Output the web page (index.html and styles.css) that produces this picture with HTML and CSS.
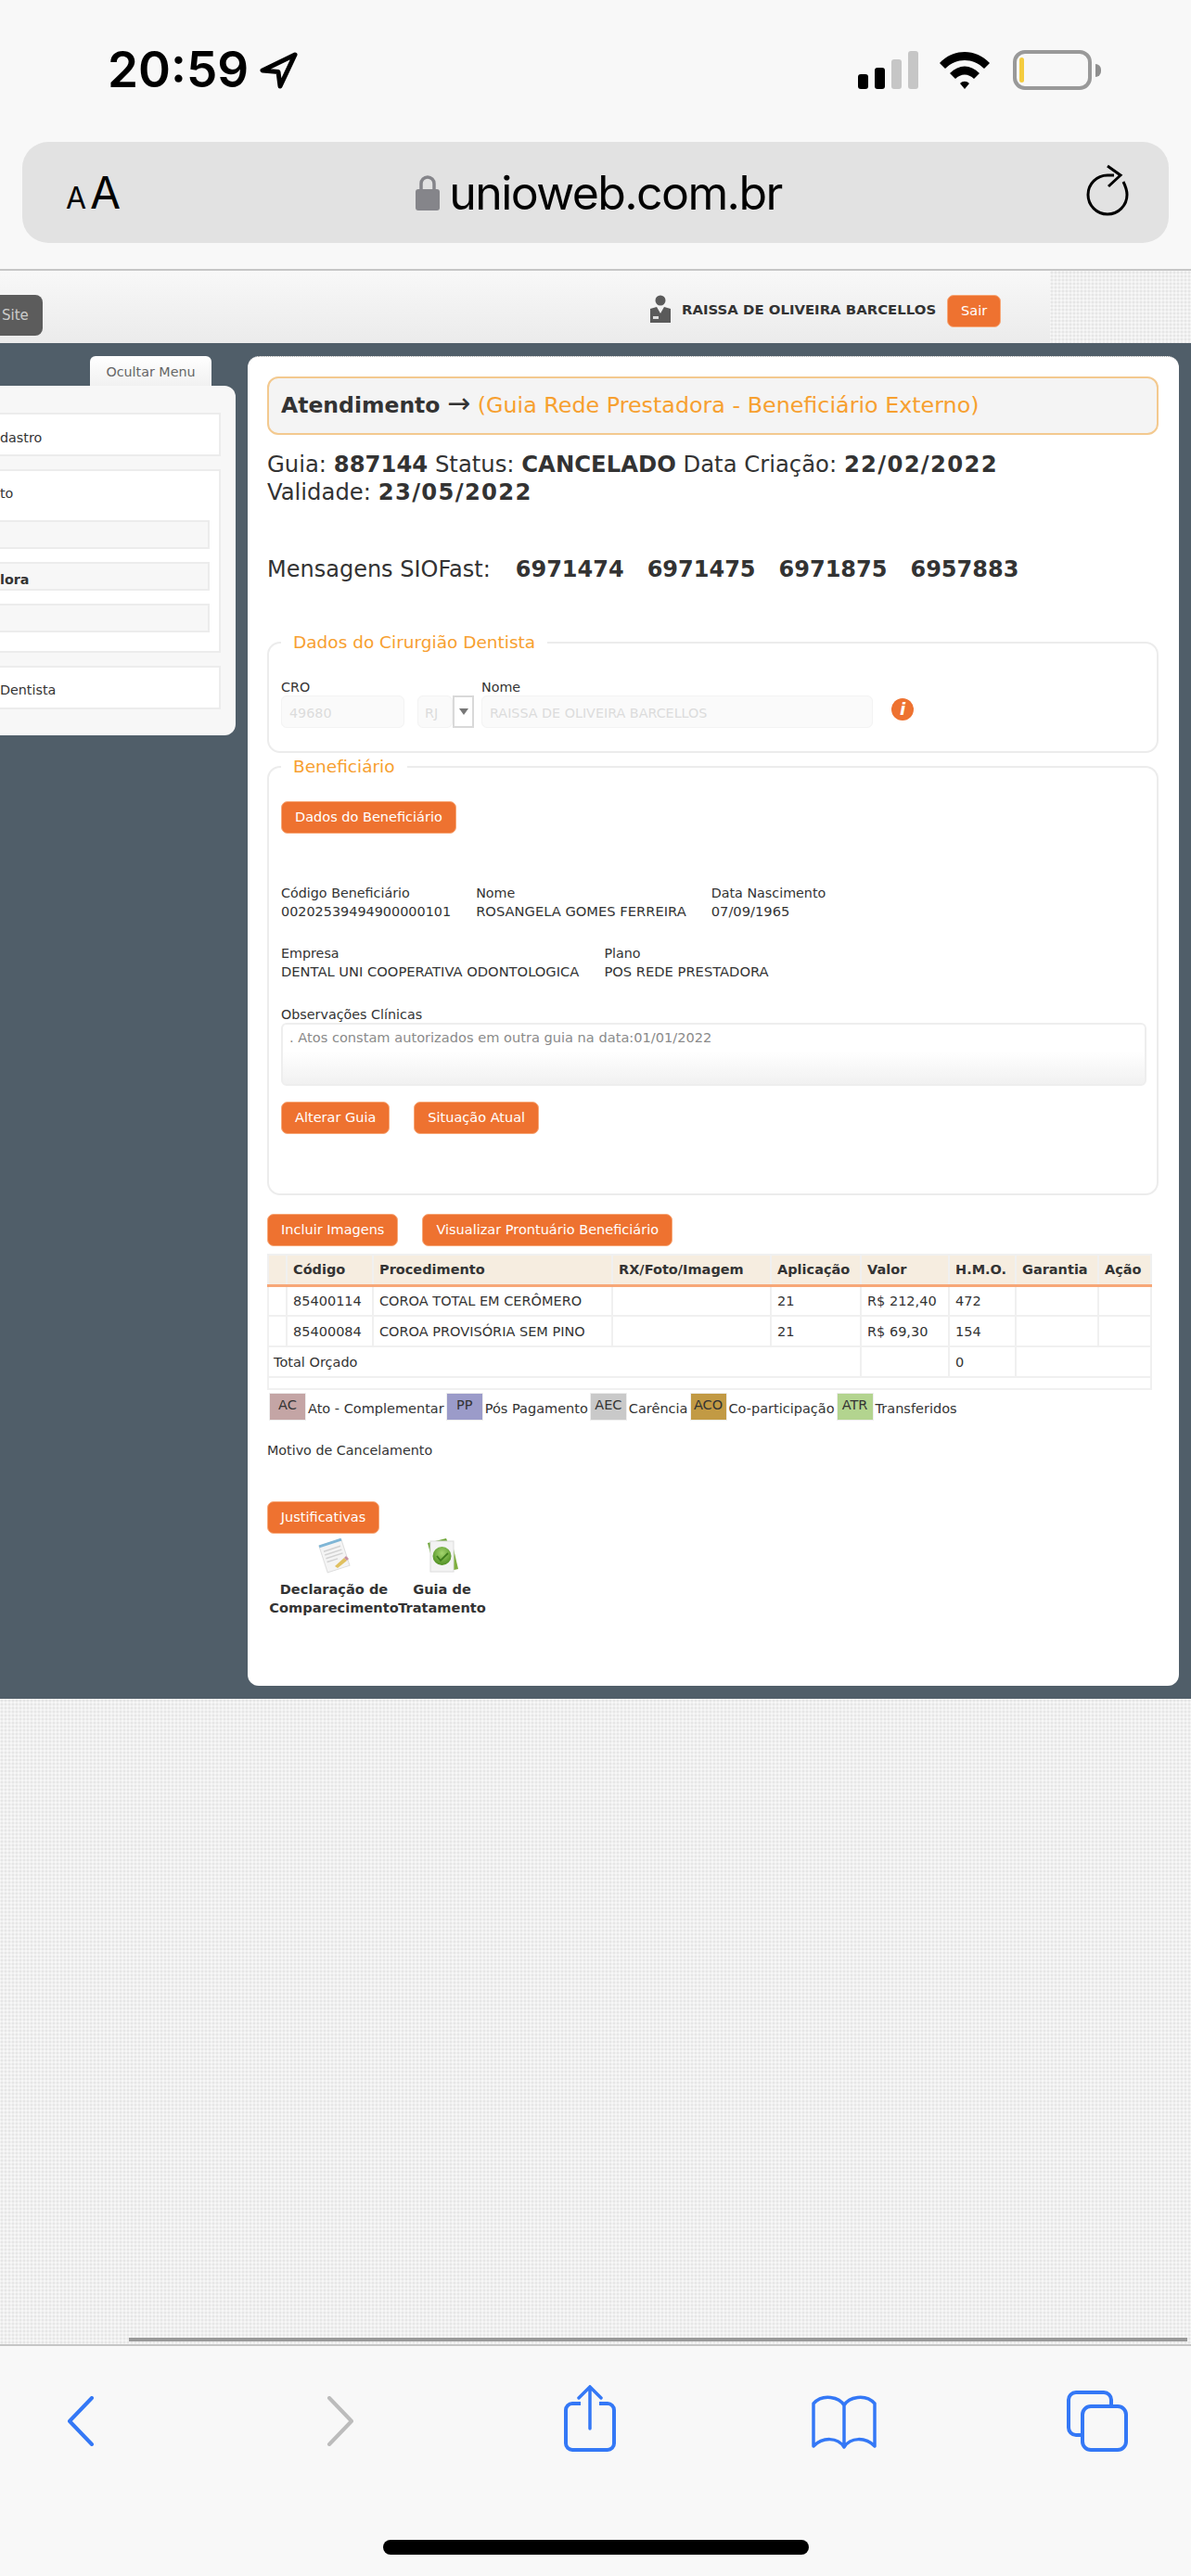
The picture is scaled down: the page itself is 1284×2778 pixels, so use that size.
FILE: index.html
```html
<!DOCTYPE html>
<html lang="pt-BR">
<head>
<meta charset="utf-8">
<title>unioweb.com.br</title>
<link rel="stylesheet" href="styles.css">
</head>
<body>
<header class="chrome-top">
  <div class="status">
    <div class="clock"><span>20:59</span>
      <svg class="loc" viewBox="0 0 41 40" width="41" height="40"><path d="M38 3 L3 20 L20 21.5 L22 37 Z" fill="none" stroke="#000" stroke-width="5" stroke-linejoin="round"/></svg>
    </div>
    <div class="status-icons">
      <div class="signal"><i class="b1"></i><i class="b2"></i><i class="b3"></i><i class="b4"></i></div>
      <svg class="wifi" viewBox="0 0 58 42" width="58" height="42"><path d="M2 14 C17 -2 41 -2 56 14 L50 20 C38 8 20 8 8 20 Z M13 25 C23 15 35 15 45 25 L39 31 C33 25 25 25 19 31 Z M24 36 C27 33 31 33 34 36 L29 42 Z" fill="#000"/></svg>
      <div class="battery"><div class="battery-body"><i class="charge"></i></div><i class="nub"></i></div>
    </div>
  </div>
  <div class="address">
    <div class="aa"><span class="a-s">A</span><span class="a-l">A</span></div>
    <div class="url">
      <svg class="lock" viewBox="0 0 26 38" width="26" height="38"><path d="M6 17 V9 a7 7 0 0 1 14 0 V17" fill="none" stroke="#85858a" stroke-width="3.5"/><rect x="0" y="15" width="26" height="23" rx="3" fill="#85858a"/></svg>
      <span>unioweb.com.br</span>
    </div>
    <svg class="reload" viewBox="0 0 46 56" width="46" height="56"><path d="M30 12 H23 a21 21 0 1 0 21 21 c0 -5 -2 -10 -4 -14" fill="none" stroke="#000" stroke-width="3"/><path d="M23 2 L37 12 L24 24" fill="none" stroke="#000" stroke-width="3"/></svg>
  </div>
</header>

<div class="page">
  <div class="topbar">
    <div class="site-wrap"><a class="site-btn">Site</a></div>
    <div class="user">
      <svg class="user-ic" viewBox="0 0 24 30" width="24" height="30"><circle cx="12" cy="6" r="5.5" fill="#5a5a5a"/><path d="M1 15 L8 13 L12 20 L16 13 L23 15 V30 H1 Z" fill="#5a5a5a"/><rect x="4" y="23" width="6" height="3" fill="#ddd"/></svg>
      <span class="user-name">RAISSA DE OLIVEIRA BARCELLOS</span>
      <a class="btn btn-sair">Sair</a>
    </div>
    <div class="top-texture"></div>
  </div>

  <div class="slate">
    <aside class="side">
      <div class="hide-tab">Ocultar Menu</div>
      <div class="side-panel">
        <div class="side-box"><div class="side-title t1">dastro</div></div>
        <div class="side-box side-group">
          <div class="side-title t2">to</div>
          <div class="side-sub"></div>
          <div class="side-sub strong">lora</div>
          <div class="side-sub"></div>
        </div>
        <div class="side-box"><div class="side-title t3">Dentista</div></div>
      </div>
    </aside>

    <main class="card">
      <h1 class="title"><b>Atendimento</b> <span class="arrow-sym">→</span> <span class="title-sub">(Guia Rede Prestadora - Beneficiário Externo)</span></h1>
      <p class="info">Guia: <b>887144</b> Status: <b>CANCELADO</b> Data Criação: <b class="date">22/02/2022</b><br>Validade: <b class="date">23/05/2022</b></p>
      <p class="info msgs">Mensagens SIOFast: <b>6971474</b><b>6971475</b><b>6971875</b><b>6957883</b></p>

      <fieldset class="fs fs-dentist">
        <legend>Dados do Cirurgião Dentista</legend>
        <div class="dent-row">
          <div class="fld f-cro"><label>CRO</label><div class="inp">49680</div></div>
          <div class="fld f-uf"><label>&nbsp;</label><div class="uf"><div class="inp">RJ</div><div class="arrow"><i></i></div></div></div>
          <div class="fld f-nome"><label>Nome</label><div class="inp">RAISSA DE OLIVEIRA BARCELLOS</div></div>
          <svg class="info-ic" viewBox="0 0 24 24" width="24" height="24"><circle cx="12" cy="12" r="12" fill="#ee7230"/><text x="12" y="18" class="info-i">i</text></svg>
        </div>
      </fieldset>

      <fieldset class="fs fs-benef">
        <legend>Beneficiário</legend>
        <a class="btn">Dados do Beneficiário</a>
        <div class="data-row r1">
          <div><label>Código Beneficiário</label><div class="code">00202539494900000101</div></div>
          <div><label>Nome</label><div>ROSANGELA GOMES FERREIRA</div></div>
          <div><label>Data Nascimento</label><div>07/09/1965</div></div>
        </div>
        <div class="data-row r2">
          <div><label>Empresa</label><div>DENTAL UNI COOPERATIVA ODONTOLOGICA</div></div>
          <div><label>Plano</label><div>POS REDE PRESTADORA</div></div>
        </div>
        <label class="obs-label">Observações Clínicas</label>
        <div class="obs">. Atos constam autorizados em outra guia na data:01/01/2022</div>
        <div class="btn-row"><a class="btn">Alterar Guia</a><a class="btn">Situação Atual</a></div>
      </fieldset>

      <div class="btn-row top"><a class="btn">Incluir Imagens</a><a class="btn">Visualizar Prontuário Beneficiário</a></div>

      <table class="grid">
        <colgroup><col class="c0"><col class="c1"><col class="c2"><col class="c3"><col class="c4"><col class="c5"><col class="c6"><col class="c7"><col class="c8"></colgroup>
        <thead><tr><th></th><th>Código</th><th>Procedimento</th><th>RX/Foto/Imagem</th><th>Aplicação</th><th>Valor</th><th>H.M.O.</th><th>Garantia</th><th>Ação</th></tr></thead>
        <tbody>
          <tr><td></td><td>85400114</td><td>COROA TOTAL EM CERÔMERO</td><td></td><td>21</td><td>R$ 212,40</td><td>472</td><td></td><td></td></tr>
          <tr><td></td><td>85400084</td><td>COROA PROVISÓRIA SEM PINO</td><td></td><td>21</td><td>R$ 69,30</td><td>154</td><td></td><td></td></tr>
          <tr><td colspan="5" class="tot">Total Orçado</td><td></td><td>0</td><td colspan="2"></td></tr>
          <tr class="blank"><td colspan="9"></td></tr>
        </tbody>
      </table>

      <div class="legend-row">
        <span class="sw ac">AC</span><span class="lb">Ato - Complementar</span>
        <span class="sw pp">PP</span><span class="lb">Pós Pagamento</span>
        <span class="sw aec">AEC</span><span class="lb">Carência</span>
        <span class="sw aco">ACO</span><span class="lb">Co-participação</span>
        <span class="sw atr">ATR</span><span class="lb">Transferidos</span>
      </div>

      <p class="motivo">Motivo de Cancelamento</p>
      <a class="btn btn-just">Justificativas</a>

      <div class="docs">
        <div class="doc d1">
          <svg viewBox="0 0 36 36" width="36" height="36"><g transform="rotate(-18 18 18)"><rect x="6" y="3" width="25" height="30" fill="#f4f4f4" stroke="#dddddd"/><rect x="6" y="2" width="25" height="3" fill="#7fb6d6"/><path d="M9 10h19M9 14h19M9 18h19M9 22h12" stroke="#d2d2d2" stroke-width="1.5"/></g><path d="M19 29 L29 20 L32 23 L22 31 Z" fill="#e0c060"/><path d="M29 20 L31 18 L34 21 L32 23 Z" fill="#c78fa0"/></svg>
          <b>Declaração de<br>Comparecimento</b>
        </div>
        <div class="doc d2">
          <svg viewBox="0 0 36 40" width="36" height="40"><defs><radialGradient id="ball" cx="50%" cy="35%" r="65%"><stop offset="0" stop-color="#a4d56e"/><stop offset="1" stop-color="#4f8f22"/></radialGradient></defs><path d="M2 6 L22 1 L25 8 L10 36 Z" fill="#6fa63a"/><path d="M29 8 L35 34 L26 36 Z" fill="#7fae3e"/><rect x="5" y="4" width="25" height="33" fill="#f3f3f3" stroke="#dcdcdc"/><circle cx="17.5" cy="20" r="10" fill="url(#ball)"/><path d="M12 20 l4 5 l8 -8" fill="none" stroke="#3f7d1c" stroke-width="1.8"/></svg>
          <b>Guia de<br>Tratamento</b>
        </div>
      </div>
    </main>
  </div>
  <div class="scroll-thumb"></div>
</div>

<footer class="chrome-bottom">
  <div class="tools">
    <svg class="t-back" viewBox="0 0 30 54" width="30" height="54"><path d="M27 2 L3 27 L27 52" fill="none" stroke="#3478f6" stroke-width="4" stroke-linecap="round" stroke-linejoin="round"/></svg>
    <svg class="t-fwd" viewBox="0 0 30 54" width="30" height="54"><path d="M3 2 L27 27 L3 52" fill="none" stroke="#bcbcbc" stroke-width="4" stroke-linecap="round" stroke-linejoin="round"/></svg>
    <svg class="t-share" viewBox="0 0 56 72" width="56" height="72"><path d="M18 20 H9 a7 7 0 0 0 -7 7 V63 a7 7 0 0 0 7 7 H47 a7 7 0 0 0 7 -7 V27 a7 7 0 0 0 -7 -7 H38" fill="none" stroke="#3478f6" stroke-width="4"/><path d="M28 47 V2 M16 14 L28 2 L40 14" fill="none" stroke="#3478f6" stroke-width="3.5" stroke-linecap="round"/></svg>
    <svg class="t-book" viewBox="0 0 70 60" width="70" height="60"><path d="M35 12 C30 3 12 -1 2 10 V56 C12 46 28 46 35 57 C42 46 58 46 68 56 V10 C58 -1 40 3 35 12 Z M35 12 V57" fill="none" stroke="#3478f6" stroke-width="3.5" stroke-linejoin="round"/></svg>
    <svg class="t-tabs" viewBox="0 0 66 66" width="66" height="66"><path d="M48 15 V10 a8 8 0 0 0 -8 -8 H10 a8 8 0 0 0 -8 8 V40 a8 8 0 0 0 8 8 H15" fill="none" stroke="#3478f6" stroke-width="4"/><rect x="17" y="17" width="47" height="47" rx="9" fill="none" stroke="#3478f6" stroke-width="4"/></svg>
  </div>
  <div class="home-bar"></div>
</footer>
</body>
</html>
```

FILE: styles.css
```css
* { box-sizing: border-box; }
html, body { margin: 0; padding: 0; }
body {
  width: 1284px; height: 2778px; overflow: hidden;
  display: flex; flex-direction: column;
  font-family: "DejaVu Sans", sans-serif; color: #333; background: #f8f8f8;
}
a { display: inline-block; }
p { margin: 0; }
label { display: block; }

/* Safari top */
.chrome-top { height: 292px; background: #f8f8f8; border-bottom: 2px solid #c6c6c6; padding: 54px 24px 0; flex: none; }
.status { height: 43px; display: flex; justify-content: space-between; }
.clock { display: flex; align-items: center; margin-left: 92px; gap: 12px; font: 600 53px/43px Inter, sans-serif; color: #000; }
.status-icons { display: flex; align-items: flex-start; gap: 23px; margin-right: 73px; }
.signal { display: flex; align-items: flex-end; gap: 7px; height: 42px; margin-right: -2px; }
.signal i { width: 11px; border-radius: 3px; background: #000; }
.b1 { height: 16px; } .b2 { height: 23px; }
.signal .b3 { height: 32px; background: #c6c6c6; }
.signal .b4 { height: 41px; background: #c6c6c6; }
.battery { display: flex; align-items: center; gap: 4px; }
.battery-body { width: 85px; height: 43px; border: 4px solid #999; border-radius: 13px; padding: 4px 3px; }
.charge { display: block; width: 5px; height: 100%; border-radius: 3px; background: #f4cc3f; }
.nub { width: 6px; height: 14px; border-radius: 0 7px 7px 0; background: #8e8e8e; }
.address { margin-top: 56px; height: 109px; border-radius: 28px; background: #e2e2e2; display: flex; align-items: center; justify-content: space-between; padding: 0 43px 0 47px; }
.aa { display: flex; align-items: baseline; gap: 4px; font-family: Inter, sans-serif; color: #000; width: 60px; }
.a-s { font-size: 32px; } .a-l { font-size: 48px; font-weight: 400; }
.url { display: flex; align-items: center; gap: 10px; margin-right: 11px; font: 400 50px/60px Inter, sans-serif; color: #000; letter-spacing: -1.6px; }
.lock { flex: none; }
.reload { margin-top: -5px; }

/* Page */
.page { position: relative; flex: 1; min-height: 0; overflow: hidden; display: flex; flex-direction: column;
  background-color: #f0f0f0;
  background-image: radial-gradient(#e6e6e6 1px, transparent 1.3px), radial-gradient(#f7f7f7 1px, transparent 1.3px);
  background-size: 4px 4px, 4px 4px;
  background-position: 0 0, 2px 2px; }
.topbar { height: 78px; flex: none; display: flex; background: linear-gradient(#f8f8f8, #ebebeb); }
.site-wrap { width: 46px; padding-top: 26px; flex: none; }
.site-btn { display: block; height: 44px; padding-left: 2px; border-radius: 0 8px 8px 0; background: #5c5c5c; color: #ccc; font-size: 15px; line-height: 44px; white-space: nowrap; }
.user { flex: 1; display: flex; align-items: flex-start; padding: 26px 0 0 654px; }
.user-ic { margin-right: 11px; flex: none; }
.user-name { font-size: 14.9px; font-weight: 700; margin: 7px 12px 0 0; white-space: nowrap; color: #333; }
.btn-sair { padding: 0 15px; flex: none; }
.top-texture { width: 152px; flex: none;
  background-color: #f0f0f0;
  background-image: radial-gradient(#e6e6e6 1px, transparent 1.3px), radial-gradient(#f7f7f7 1px, transparent 1.3px);
  background-size: 4px 4px, 4px 4px;
  background-position: 0 0, 2px 2px; }

.slate { flex: none; height: 1462px; background: #505e69; display: flex; padding-top: 14px; overflow: hidden; }
.side { width: 254px; margin-right: 13px; flex: none; display: flex; flex-direction: column; align-items: flex-end; }
.hide-tab { width: 131px; height: 32px; margin-right: 26px; background: linear-gradient(#fff, #f1f1f1); border-radius: 6px 6px 0 0; font-size: 14.3px; color: #666; text-align: center; line-height: 34px; white-space: nowrap; }
.side-panel { width: 100%; height: 377px; background: #f7f7f7; border-radius: 0 12px 12px 0; padding: 29px 16px 0 0; }
.side-box { background: #fff; border: 2px solid #ececec; border-left: 0; height: 47px; margin-bottom: 14px; overflow: hidden; }
.side-group { height: 198px; }
.side-title { font-size: 14.3px; white-space: nowrap; color: #333; }
.t1 { line-height: 51px; }
.t2 { line-height: 33px; margin-top: 8px; height: 45px; }
.t3 { line-height: 48px; }
.side-sub { height: 31px; margin: 0 10px 14px 0; background: #f7f7f7; border: 2px solid #ececec; border-left: 0; }
.side-sub.strong { font-size: 14.3px; font-weight: 700; line-height: 35px; white-space: nowrap; }

.card { width: 1004px; height: 1434px; flex: none; background: #fff; border-radius: 12px; padding: 21px 22px 0 21px; border-top: 1px dotted #aaa; }
.title { margin: 0; height: 63px; border: 2px solid #f3c98f; border-radius: 12px; background: #f4f4f4; padding: 0 13px; font-size: 23.8px; font-weight: 400; line-height: 58px; white-space: nowrap; }
.title b { font-size: 23.5px; }
.arrow-sym { font-size: 30px; line-height: 30px; }
.title-sub { color: #f7a030; }
.info { font-size: 24.3px; line-height: 30px; margin-top: 17px; white-space: nowrap; }
.date { letter-spacing: 1.3px; }
.msgs { margin-top: 53px; display: flex; font-size: 24px; }
.msgs b { margin-left: 25px; }
.msgs b:first-child { margin-left: 27px; }

.fs { border: 2px solid #ececec; border-radius: 14px; margin: 0; padding: 0 13px; min-width: 0; }
.fs legend { color: #f7a030; font-size: 18.5px; padding: 0 13px; margin-left: 0; line-height: 24px; }
.fs-dentist { margin-top: 52px; height: 131px; }
.dent-row { display: flex; align-items: flex-start; margin-top: 27px; }
.fld label { font-size: 14.3px; line-height: 18px; height: 18px; }
.inp { height: 35px; background: #fafafa; border: 1px solid #f3f3f3; border-radius: 6px; padding: 0 8px; font-size: 14.3px; color: #dcdcdc; line-height: 36px; white-space: nowrap; }
.f-cro { width: 133px; margin-right: 14px; }
.f-uf { width: 61px; margin-right: 8px; }
.uf { display: flex; }
.uf .inp { width: 38px; padding: 0 7px; }
.arrow { width: 23px; height: 35px; border: 2px solid #d9d9d9; display: flex; align-items: center; justify-content: center; }
.arrow i { width: 0; height: 0; border: 5px solid transparent; border-top: 7px solid #777; border-bottom: 0; }
.f-nome { width: 422px; margin-right: 20px; }
.info-ic { margin-top: 21px; flex: none; }
.info-i { font: italic 700 18px "DejaVu Sans", sans-serif; fill: #fff; text-anchor: middle; }

.fs-benef { margin-top: 3px; height: 474px; font-size: 14.3px; }
.btn { height: 35px; padding: 0 14px; border-radius: 7px; background: #ee7230; border: 1px solid #f7a777; box-shadow: inset 0 0 0 1px #ee7230; color: #fff; font-size: 14.5px; line-height: 33px; white-space: nowrap; }
.fs-benef > .btn { margin-top: 25px; }
.data-row { display: flex; gap: 27px; line-height: 20px; font-size: 14.7px; white-space: nowrap; }
.data-row label { font-size: 14.3px; }
.data-row .code { font-size: 14.4px; }
.r1 { margin-top: 54px; }
.r2 { margin-top: 25px; }
.obs-label { margin-top: 26px; line-height: 20px; }
.obs { height: 68px; margin-top: -1px; width: 933px; border: 2px solid #eee; border-radius: 6px; background: linear-gradient(#fff 45%, #f1f1f1); padding: 5px 7px; font-size: 14.6px; color: #8a8a8a; white-space: nowrap; }
.btn-row { display: flex; gap: 26px; margin-top: 17px; }
.btn-row.top { margin-top: 20px; gap: 26px; }

.grid { margin-top: 8px; width: 952px; border-collapse: collapse; table-layout: fixed; font-size: 14.5px; }
.c0 { width: 20px; } .c1 { width: 93px; } .c2 { width: 258px; } .c3 { width: 171px; } .c4 { width: 97px; } .c5 { width: 95px; } .c6 { width: 72px; } .c7 { width: 89px; } .c8 { width: 57px; }
.grid th, .grid td { border: 2px solid #f0f0f0; padding: 0 6px; text-align: left; white-space: nowrap; overflow: hidden; }
.grid th { height: 33px; background: #f6ede0; border-bottom: 3px solid #f7a777; font-weight: 700; }
.grid td { height: 33px; }
.grid .tot { padding-left: 5px; }
.grid .blank td { height: 13px; padding: 0; }

.legend-row { display: flex; align-items: flex-start; margin-top: 3px; padding-left: 2px; font-size: 14.5px; height: 30px; white-space: nowrap; }
.sw { width: 40px; height: 30px; text-align: center; line-height: 24px; border: 1px solid #eee; flex: none; }
.lb { margin: 0 2px; line-height: 34px; }
.ac { background: #c4a5a5; } .pp { background: #9b9bc9; } .aec { background: #c9c9c9; } .aco { background: #c29a44; } .atr { background: #b3d48f; }

.motivo { margin-top: 22px; font-size: 14.3px; line-height: 20px; }
.btn-just { margin-top: 45px; display: block; width: 121px; text-align: center; padding: 0; }
.docs { display: flex; margin-top: 4px; margin-left: 2px; }
.doc { display: flex; flex-direction: column; align-items: center; font-size: 14.6px; line-height: 20px; text-align: center; color: #333; white-space: nowrap; }
.doc svg { height: 40px; margin-bottom: 6px; }
.d1 { width: 140px; } .d2 { width: 93px; }

.scroll-thumb { position: absolute; left: 139px; right: 4px; bottom: 3px; height: 4px; background: #999; }

/* Safari bottom */
.chrome-bottom { height: 250px; flex: none; background: #f8f8f8; border-top: 2px solid #c6c6c6; position: relative; }
.tools { display: flex; align-items: flex-start; padding: 42px 0 0 72px; }
.tools svg { flex: none; }
.t-back { margin-top: 12px; margin-right: 250px; }
.t-fwd { margin-top: 12px; margin-right: 226px; }
.t-share { margin-top: 0; margin-right: 211px; }
.t-book { margin-top: 10px; margin-right: 205px; }
.t-tabs { margin-top: 6px; }
.home-bar { position: absolute; left: 413px; top: 209px; width: 459px; height: 16px; border-radius: 8px; background: #000; }
```
